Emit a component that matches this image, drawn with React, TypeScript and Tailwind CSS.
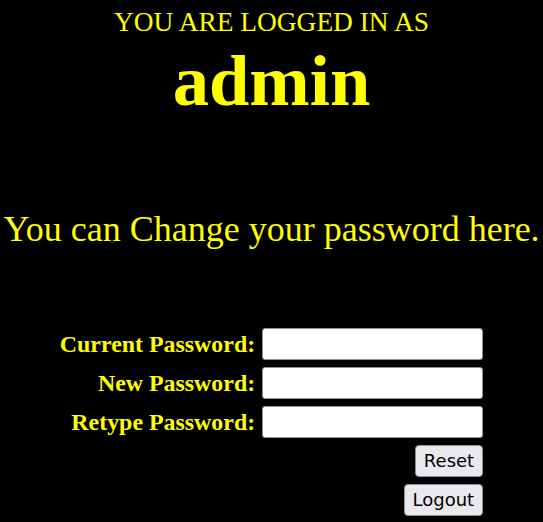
import React from "react";

export default function App() {
  const serif = { fontFamily: '"Liberation Serif", "Times New Roman", serif' };
  const labels = ["Current Password:", "New Password:", "Retype Password:"];
  return (
    <div className="min-h-[522px] w-full bg-black text-[#ffff00] overflow-hidden" style={serif}>
      <div className="pt-[7px] text-center text-[27.4px] leading-[31px] whitespace-nowrap">YOU ARE LOGGED IN AS</div>
      <div className="mt-[2.5px] text-center text-[72.5px] leading-[80px] font-bold">admin</div>
      <div className="mt-[88px] text-center text-[36px] leading-[40px] whitespace-nowrap">You can Change your password here.</div>
      <div className="mt-[79.5px] flex justify-center">
        <div className="grid grid-cols-[auto_221px] gap-x-[7px] gap-y-[7px] items-center">
          {labels.map((l) => (
            <React.Fragment key={l}>
              <div className="text-right font-bold text-[23.9px] leading-[32px] whitespace-nowrap">{l}</div>
              <input
                type="password"
                className="h-[32px] w-[221px] bg-white border border-[#8f8f9d] rounded-[3px] outline-none"
              />
            </React.Fragment>
          ))}
          <div />
          <div className="flex justify-end">
            <button
              className="h-[32px] px-[8px] bg-[#e9e9ed] border border-[#8f8f9d] rounded-[4px] text-black text-[18px] leading-[20px]"
              style={{ fontFamily: '"DejaVu Sans", Verdana, sans-serif' }}
            >
              Reset
            </button>
          </div>
          <div />
          <div className="flex justify-end">
            <button
              className="h-[32px] px-[8px] bg-[#e9e9ed] border border-[#8f8f9d] rounded-[4px] text-black text-[18px] leading-[20px]"
              style={{ fontFamily: '"DejaVu Sans", Verdana, sans-serif' }}
            >
              Logout
            </button>
          </div>
        </div>
      </div>
    </div>
  );
}
